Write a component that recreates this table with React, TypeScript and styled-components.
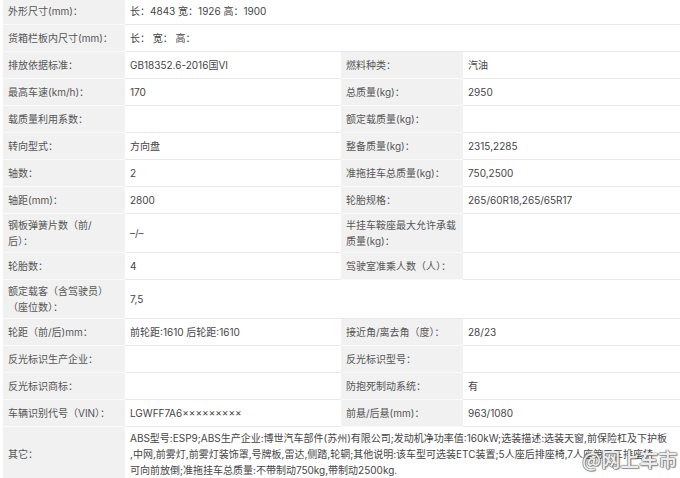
import React from "react";
import styled, { createGlobalStyle } from "styled-components";

const Global = createGlobalStyle`
  html, body { margin: 0; padding: 0; background: #ffffff; }
  body {
    font-family: Inter, "Noto Sans CJK SC", sans-serif;
    -webkit-font-smoothing: antialiased;
  }
`;

const Page = styled.div`
  position: relative;
  width: 680px;
  height: 478px;
  overflow: hidden;
  padding-left: 3px;
  box-sizing: border-box;
`;

const Table = styled.div`
  display: grid;
  grid-template-columns: 122px 216px 122px 1fr;
  margin-top: -2px;
  font-size: 10px;
  line-height: 16px;
`;

const Cell = styled.div<{ $span?: number }>`
  display: flex;
  align-items: center;
  min-height: 27px;
  box-sizing: border-box;
  padding: 3px 5px 3px;
  grid-column: span ${(p) => p.$span ?? 1};
`;

const Label = styled(Cell)`
  background: #f1f1f1;
  color: #555555;
  border-bottom: 1px solid #fafafa;
`;

const Value = styled(Cell)`
  background: #ffffff;
  color: #454545;
  border-bottom: 1px solid #e9e9e9;
`;

const Lines = styled.div`
  display: flex;
  flex-direction: column;
`;

const Line = styled.span`
  white-space: nowrap;
`;

const Watermark = styled.div`
  position: absolute;
  left: 582px;
  top: 447px;
  font-family: "Noto Sans CJK SC", sans-serif;
  font-size: 19px;
  line-height: 24px;
  font-weight: 700;
  color: rgba(255, 255, 255, 0.92);
  text-shadow: 0 0 1px rgba(50, 50, 50, 0.95), 0 0 1px rgba(50, 50, 50, 0.95),
    1px 1px 1px rgba(80, 80, 80, 0.5);
  white-space: nowrap;
`;

type Row =
  | { kind: "wide"; label: React.ReactNode; value: React.ReactNode }
  | {
      kind: "pair";
      l1: React.ReactNode;
      v1: React.ReactNode;
      l2: React.ReactNode;
      v2: React.ReactNode;
    };

const rows: Row[] = [
  { kind: "wide", label: "外形尺寸(mm)：", value: "长：4843 宽：1926 高：1900" },
  { kind: "wide", label: "货箱栏板内尺寸(mm)：", value: "长： 宽： 高：" },
  { kind: "pair", l1: "排放依据标准：", v1: "GB18352.6-2016国VI", l2: "燃料种类：", v2: "汽油" },
  { kind: "pair", l1: "最高车速(km/h)：", v1: "170", l2: "总质量(kg)：", v2: "2950" },
  { kind: "pair", l1: "载质量利用系数：", v1: "", l2: "额定载质量(kg)：", v2: "" },
  { kind: "pair", l1: "转向型式：", v1: "方向盘", l2: "整备质量(kg)：", v2: "2315,2285" },
  { kind: "pair", l1: "轴数：", v1: "2", l2: "准拖挂车总质量(kg)：", v2: "750,2500" },
  { kind: "pair", l1: "轴距(mm)：", v1: "2800", l2: "轮胎规格：", v2: "265/60R18,265/65R17" },
  {
    kind: "pair",
    l1: (
      <Lines>
        <Line>钢板弹簧片数（前/</Line>
        <Line>后）：</Line>
      </Lines>
    ),
    v1: "–/–",
    l2: (
      <Lines>
        <Line>半挂车鞍座最大允许承载</Line>
        <Line>质量(kg)：</Line>
      </Lines>
    ),
    v2: "",
  },
  { kind: "pair", l1: "轮胎数：", v1: "4", l2: "驾驶室准乘人数（人）：", v2: "" },
  {
    kind: "wide",
    label: (
      <Lines>
        <Line>额定载客（含驾驶员）</Line>
        <Line>（座位数）：</Line>
      </Lines>
    ),
    value: "7,5",
  },
  { kind: "pair", l1: "轮距（前/后)mm：", v1: "前轮距:1610 后轮距:1610", l2: "接近角/离去角（度）：", v2: "28/23" },
  { kind: "pair", l1: "反光标识生产企业：", v1: "", l2: "反光标识型号：", v2: "" },
  { kind: "pair", l1: "反光标识商标：", v1: "", l2: "防抱死制动系统：", v2: "有" },
  { kind: "pair", l1: "车辆识别代号（VIN）：", v1: "LGWFF7A6×××××××××", l2: "前悬/后悬(mm)：", v2: "963/1080" },
  {
    kind: "wide",
    label: "其它：",
    value: (
      <Lines>
        <Line>ABS型号:ESP9;ABS生产企业:博世汽车部件(苏州)有限公司;发动机净功率值:160kW;选装描述:选装天窗,前保险杠及下护板</Line>
        <Line>,中网,前雾灯,前雾灯装饰罩,号牌板,雷达,侧踏,轮辋;其他说明:该车型可选装ETC装置;5人座后排座椅,7人座第二三排座椅</Line>
        <Line>可向前放倒;准拖挂车总质量:不带制动750kg,带制动2500kg.</Line>
      </Lines>
    ),
  },
];

export default function App() {
  return (
    <>
      <Global />
      <Page>
        <Table>
          {rows.map((r, i) =>
            r.kind === "wide" ? (
              <React.Fragment key={i}>
                <Label>{r.label}</Label>
                <Value $span={3}>{r.value}</Value>
              </React.Fragment>
            ) : (
              <React.Fragment key={i}>
                <Label>{r.l1}</Label>
                <Value>{r.v1}</Value>
                <Label>{r.l2}</Label>
                <Value>{r.v2}</Value>
              </React.Fragment>
            )
          )}
        </Table>
        <Watermark>@网上车市</Watermark>
      </Page>
    </>
  );
}
